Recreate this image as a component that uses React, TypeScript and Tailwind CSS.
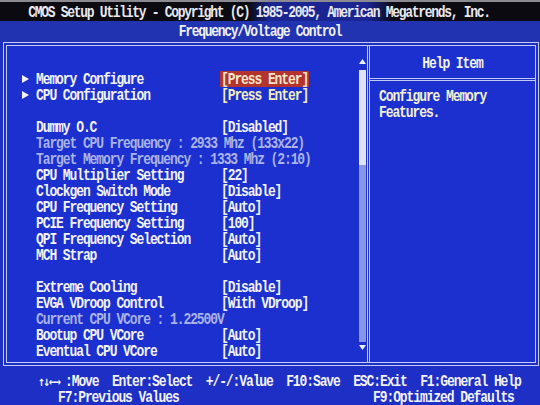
import React from "react";

type Row =
  | { kind: "blank" }
  | { kind: "item"; label: string; value: string; arrow?: boolean; sel?: boolean; yellow?: boolean }
  | { kind: "info"; text: string };

const rows: Row[] = [
  { kind: "item", arrow: true, label: "Memory Configure", value: "[Press Enter]", sel: true },
  { kind: "item", arrow: true, label: "CPU Configuration", value: "[Press Enter]", yellow: true },
  { kind: "blank" },
  { kind: "item", label: "Dummy O.C", value: "[Disabled]" },
  { kind: "info", text: "Target CPU Frequency : 2933 Mhz (133x22)" },
  { kind: "info", text: "Target Memory Frequency : 1333 Mhz (2:10)" },
  { kind: "item", label: "CPU Multiplier Setting", value: "[22]" },
  { kind: "item", label: "Clockgen Switch Mode", value: "[Disable]" },
  { kind: "item", label: "CPU Frequency Setting", value: "[Auto]" },
  { kind: "item", label: "PCIE Frequency Setting", value: "[100]" },
  { kind: "item", label: "QPI Frequency Selection", value: "[Auto]" },
  { kind: "item", label: "MCH Strap", value: "[Auto]" },
  { kind: "blank" },
  { kind: "item", label: "Extreme Cooling", value: "[Disable]" },
  { kind: "item", label: "EVGA VDroop Control", value: "[With VDroop]" },
  { kind: "info", text: "Current CPU VCore : 1.22500V" },
  { kind: "item", label: "Bootup CPU VCore", value: "[Auto]" },
  { kind: "item", label: "Eventual CPU VCore", value: "[Auto]" },
];

function T({ children, className = "" }: { children: React.ReactNode; className?: string }) {
  return (
    <span className={"inline-block whitespace-pre leading-[13px] scale-y-[1.22] " + className}>{children}</span>
  );
}

export default function App() {
  return (
    <div className="w-[540px] h-[405px] overflow-hidden bg-[#1e2fc6] font-['Liberation_Mono','DejaVu_Sans_Mono',monospace] font-bold text-[13px] tracking-[-1.1px] leading-[16px] text-[#f2f2f8] flex flex-col">
      {/* title bar */}
      <div className="h-[21px] shrink-0 flex items-center justify-center pr-[22px] pt-[2px] bg-[linear-gradient(90deg,#0a0a10_0%,#0a0a10_46%,#1a2592_50%,#1a2592_68%,#0a0a10_73%,#0a0a10_100%)] border-t-2 border-[#8a8a90]">
        <T className="text-[#e8e8f0] tracking-[-1.3px]">CMOS Setup Utility - Copyright (C) 1985-2005, American Megatrends, Inc.</T>
      </div>
      {/* subtitle */}
      <div className="h-[21px] shrink-0 flex items-center justify-center pr-[20px] bg-[#2233b2]">
        <T className="text-[#f0f0f4] tracking-[-1.3px]">Frequency/Voltage Control</T>
      </div>
      {/* main box */}
      <div className="ml-[3px] mr-[1px] h-[324px] shrink-0 border border-[#c4cbf0] p-[2px] bg-[#1e2fc6]">
        <div className="h-full border border-[#c4cbf0] flex bg-[#1c30cf]">
          {/* left pane */}
          <div className="w-[360px] shrink-0 flex">
            <div className="w-[352px] pt-[25px]">
              {rows.map((r, i) => {
                if (r.kind === "blank") return <div key={i} className="h-[16px]" />;
                if (r.kind === "info")
                  return (
                    <div key={i} className="h-[16px] flex items-center pl-[29px]">
                      <T className="text-[#a9b3e6]">{r.text}</T>
                    </div>
                  );
                return (
                  <div key={i} className="h-[16px] flex items-center pl-[15px]">
                    <div className="w-[14px] shrink-0 flex items-center">
                      {r.arrow && (
                        <svg width="7" height="8" viewBox="0 0 7 8">
                          <path d="M0 0 L7 4 L0 8 Z" fill="#f2f2f8" />
                        </svg>
                      )}
                    </div>
                    <div className="w-[185px] shrink-0 flex items-center">
                      <T>{r.label}</T>
                    </div>
                    <div
                      className={
                        "h-[16px] -ml-[1px] pl-[1px] pr-[1px] flex items-center " +
                        (r.sel ? "bg-[#b4332e] text-[#f6e6cc]" : r.yellow ? "text-[#f3efbe]" : "")
                      }
                    >
                      <T>{r.value}</T>
                    </div>
                  </div>
                );
              })}
            </div>
            {/* scrollbar */}
            <div className="w-[7px] shrink-0 flex flex-col items-center pt-[13px]">
              <svg width="7" height="5" viewBox="0 0 7 5">
                <path d="M3.5 0 L7 5 L0 5 Z" fill="#eef0fa" />
              </svg>
              <div className="mt-[6px] w-[7px] h-[272px] bg-[#8696e4] flex flex-col">
                <div className="h-[95px] bg-[#dfe3f6]" />
              </div>
              <svg className="mt-[3px]" width="7" height="5" viewBox="0 0 7 5">
                <path d="M0 0 L7 0 L3.5 5 Z" fill="#eef0fa" />
              </svg>
            </div>
          </div>
          {/* divider */}
          <div className="w-[3px] shrink-0 border-x border-[#c4cbf0]" />
          {/* help pane */}
          <div className="flex-1 flex flex-col">
            <div className="h-[35px] shrink-0 pt-[2px] border-b-[3px] border-double border-[#c4cbf0] flex items-center justify-center">
              <T className="text-[#f2f2e8]">Help Item</T>
            </div>
            <div className="pt-[7px] pl-[9px] flex flex-col text-[#f4f0d4]">
              <div className="h-[16px] flex items-center"><T>Configure Memory</T></div>
              <div className="h-[16px] flex items-center"><T>Features.</T></div>
            </div>
          </div>
        </div>
      </div>
      {/* footer */}
      <div className="flex-1 pt-[7px] pl-[38px] bg-[#1e2fc6] text-[#f2f2f8]">
        <div className="h-[16px] flex items-center">
          <span className="inline-block w-[27px] whitespace-pre leading-[13px] scale-y-[1.22] font-['DejaVu_Sans_Mono',monospace] text-[11px] tracking-[-1.3px]">
            {"↑↓←→"}
          </span>
          <T>{":Move  Enter:Select  +/-/:Value  F10:Save  ESC:Exit  F1:General Help"}</T>
        </div>
        <div className="h-[16px] flex items-center">
          <T>{"   F7:Previous Values                             F9:Optimized Defaults"}</T>
        </div>
      </div>
    </div>
  );
}
